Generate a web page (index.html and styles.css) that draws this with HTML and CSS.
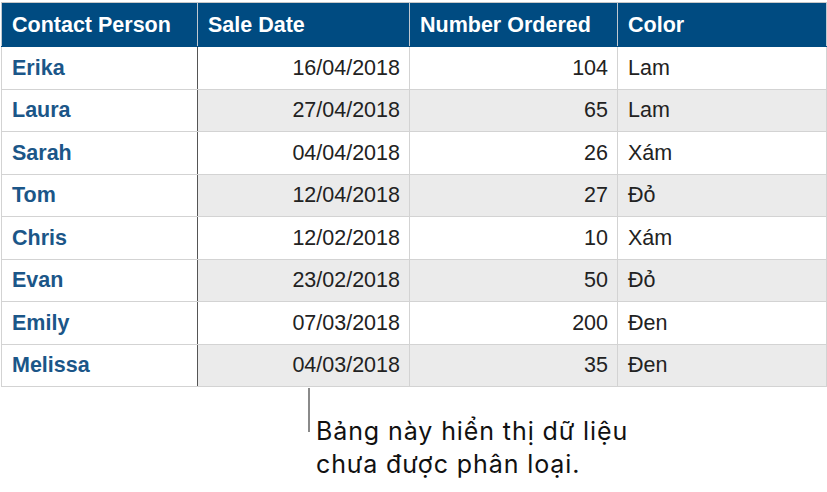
FILE: index.html
```html
<!DOCTYPE html>
<html>
<head>
<meta charset="utf-8">
<link rel="stylesheet" href="styles.css">
</head>
<body>
<table class="grid">
  <colgroup>
    <col class="c1"><col class="c2"><col class="c3"><col class="c4">
  </colgroup>
  <thead>
    <tr class="head">
      <th class="first">Contact Person</th>
      <th>Sale Date</th>
      <th>Number Ordered</th>
      <th>Color</th>
    </tr>
  </thead>
  <tbody>
    <tr class="r odd"><td class="name">Erika</td><td class="num">16/04/2018</td><td class="num">104</td><td>Lam</td></tr>
    <tr class="r even"><td class="name">Laura</td><td class="num">27/04/2018</td><td class="num">65</td><td>Lam</td></tr>
    <tr class="r odd"><td class="name">Sarah</td><td class="num">04/04/2018</td><td class="num">26</td><td>Xám</td></tr>
    <tr class="r even"><td class="name">Tom</td><td class="num">12/04/2018</td><td class="num">27</td><td>Đỏ</td></tr>
    <tr class="r odd"><td class="name">Chris</td><td class="num">12/02/2018</td><td class="num">10</td><td>Xám</td></tr>
    <tr class="r even"><td class="name">Evan</td><td class="num">23/02/2018</td><td class="num">50</td><td>Đỏ</td></tr>
    <tr class="r odd"><td class="name">Emily</td><td class="num">07/03/2018</td><td class="num">200</td><td>Đen</td></tr>
    <tr class="r even"><td class="name">Melissa</td><td class="num">04/03/2018</td><td class="num">35</td><td>Đen</td></tr>
  </tbody>
</table>
<div class="callout">
  <div class="leader"></div>
  <p class="note">Bảng này hiển thị dữ liệu<br>chưa được phân loại.</p>
</div>
</body>
</html>
```
FILE: styles.css
```css
html, body {
  margin: 0;
  padding: 0;
  background: #ffffff;
}
body {
  padding: 2px 0 0 1px;
}
.grid {
  border-collapse: collapse;
  table-layout: fixed;
  width: 825px;
  font-family: "Liberation Sans", Arial, sans-serif;
  font-size: 21.5px;
}
.c1 { width: 196px; }
.c2 { width: 212px; }
.c3 { width: 208px; }
.c4 { width: 209px; }
.grid th, .grid td {
  padding: 0 9px 0 10px;
  border: 1px solid #d3d3d3;
  white-space: nowrap;
  overflow: hidden;
}
.head th {
  height: 41px;
  background: #004b81;
  color: #ffffff;
  font-weight: bold;
  text-align: left;
  border-top: 1px solid #c8c8c8;
  border-left: 1px solid #c0c8d0;
  border-right: 1px solid #c0c8d0;
  border-bottom: 1px solid #004b81;
  padding-top: 2px;
}
.r td {
  color: #222222;
}
.r.odd td { height: 42px; }
.r.even td { height: 41px; background: #ebebeb; }
.r td.name {
  background: #ffffff;
  color: #1b5688;
  font-weight: bold;
  border-right: 1px solid #555555;
}
.num { text-align: right; }
.callout {
  display: flex;
  align-items: flex-start;
  margin-left: 307px;
}
.leader {
  width: 2px;
  height: 44px;
  margin-top: 1px;
  background: #8a8a8a;
}
.note {
  margin: 28px 0 0 6px;
  font-family: Inter, "Noto Sans", sans-serif;
  font-size: 25px;
  letter-spacing: 0.9px;
  line-height: 33px;
  color: #111111;
}
```
